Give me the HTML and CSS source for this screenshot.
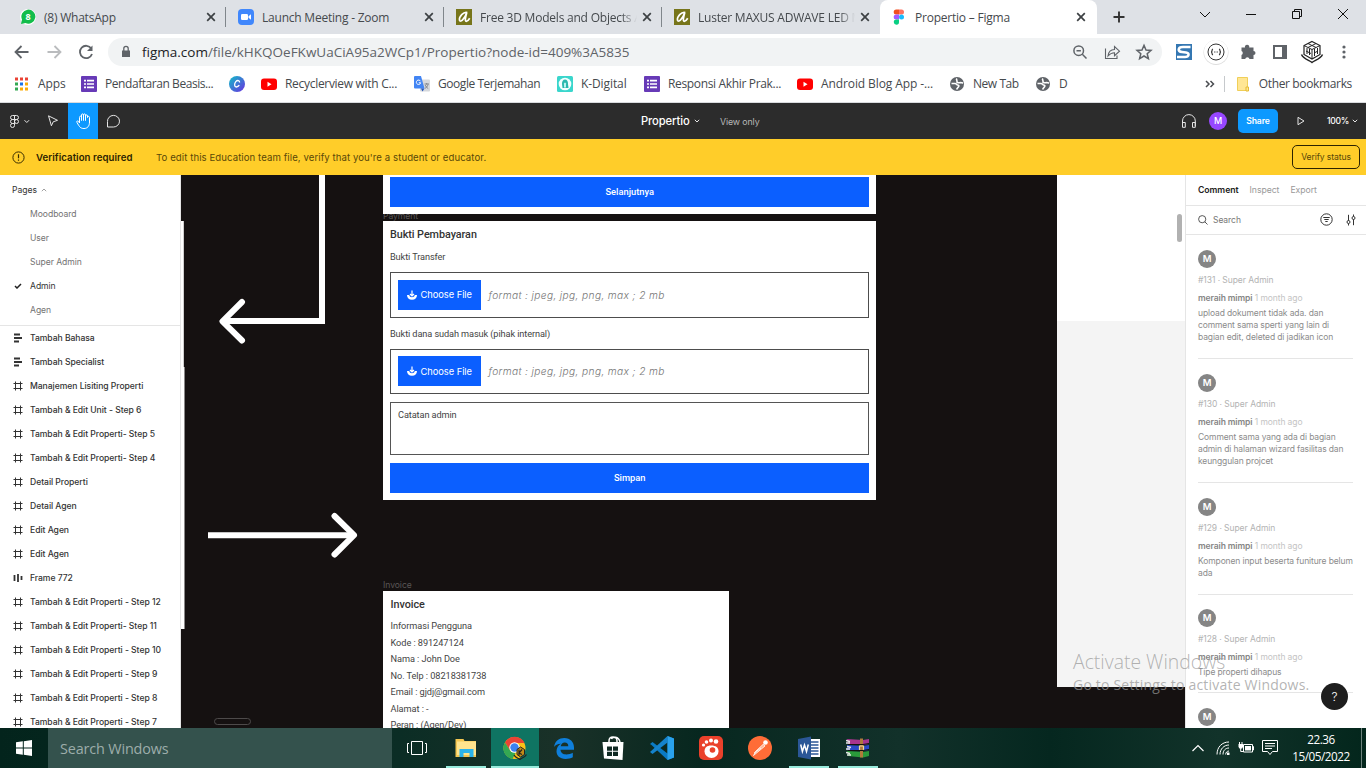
FILE: index.html
```
<!DOCTYPE html>
<html lang="id">
<head>
<meta charset="utf-8">
<title>Propertio – Figma</title>
<link rel="stylesheet" href="styles.css">
</head>
<body>
<svg class="defs" aria-hidden="true">
  <symbol id="x" viewBox="0 0 10 10"><path d="M1.200 1.200l7.600 7.600M8.800 1.200L1.200 8.800" fill="none" stroke="#3c4043" stroke-width="1.700"/></symbol>
  <symbol id="arch" viewBox="0 0 16 16"><rect width="16" height="16" fill="#77751a"/><path d="M11.300 3.500C7.500 2.300 2.800 8 3.500 11.200c.8 2.500 5-.8 7.300-7.700C9.500 8 8.600 12.300 10.300 12.300c1.200 0 2.700-1.800 3.400-3" fill="none" stroke="#fff" stroke-width="1.700"/></symbol>
  <symbol id="forms" viewBox="0 0 16 16"><rect width="16" height="16" rx="1" fill="#673ab7"/><path d="M3 4.700h2M6 4.700h7M3 8h2M6 8h7M3 11.300h2M6 11.300h7" stroke="#fff" stroke-width="1.700"/></symbol>
  <symbol id="yt" viewBox="0 0 16 16"><rect y="2.500" width="16" height="11.500" rx="3" fill="#f00"/><path d="M6.500 5.800v5l4-2.500z" fill="#fff"/></symbol>
  <symbol id="globe" viewBox="0 0 16 16"><circle cx="8" cy="8" r="7" fill="#5f6368"/><path d="M2.500 7.500h3.500c1.500 0 1.500 1.500 2.500 1.500s2 .5 1 1.800-1.500 1.500-1.800 2.700M8 2.500c-1.500 1.500.5 2 0 3s1 1.500 2.500 1.200 2.500.3 3.500.3" fill="none" stroke="#fff" stroke-width="1.600"/></symbol>
  <symbol id="frame" viewBox="0 0 10 10"><path d="M2.500.5v9M7.500.5v9M.5 2.500h9M.5 7.500h9" stroke="#333" stroke-width="1"/></symbol>
  <symbol id="rows" viewBox="0 0 10 10"><path d="M1 1.500h6M1 5h8M1 8.500h5" stroke="#333" stroke-width="1.800"/></symbol>
  <symbol id="cols" viewBox="0 0 10 10"><path d="M1.500 2v6M5 1v8M8.500 3v4" stroke="#333" stroke-width="1.800"/></symbol>
  <symbol id="upload" viewBox="0 0 12 12"><path d="M1 6h2.200c.3 1.500 1.400 2.200 2.800 2.200S8.500 7.500 8.800 6H11c0 3-2 4.800-5 4.800S1 9 1 6z" fill="#fff"/><path d="M6 1.500v5M4 5l2 2 2-2" fill="none" stroke="#fff" stroke-width="1.200"/></symbol>
</svg>

<header class="tabs">
  <div class="tab">
    <svg class="i16" viewBox="0 0 16 16"><circle cx="8" cy="8" r="8" fill="#fff"/><path d="M1 15l1-4.500A7 7 0 1 1 5.500 14z" fill="#12bd4b"/><text x="8" y="11.200" text-anchor="middle" class="wa">8</text></svg>
    <span class="t-title">(8) WhatsApp</span><svg class="i10"><use href="#x"/></svg></div>
  <div class="tab">
    <svg class="i16" viewBox="0 0 16 16"><rect width="16" height="16" rx="4" fill="#4087fc"/><rect x="3" y="5" width="7" height="6" rx="1.200" fill="#fff"/><path d="M10.500 7.200L13 5.300v5.400l-2.500-1.900z" fill="#fff"/></svg>
    <span class="t-title">Launch Meeting - Zoom</span><svg class="i10"><use href="#x"/></svg></div>
  <div class="tab"><svg class="i16"><use href="#arch"/></svg><span class="t-title fade">Free 3D Models and Objects A</span><svg class="i10"><use href="#x"/></svg></div>
  <div class="tab last"><svg class="i16"><use href="#arch"/></svg><span class="t-title fade">Luster MAXUS ADWAVE LED M</span><svg class="i10"><use href="#x"/></svg></div>
  <div class="tab active">
    <svg class="i16" viewBox="0 0 16 16"><path d="M5.200.5H8v5H5.200a2.500 2.500 0 0 1 0-5z" fill="#f24e1e"/><path d="M8 .5h2.500a2.500 2.500 0 0 1 0 5H8z" fill="#ff7262"/><path d="M5.200 5.500H8v5H5.200a2.500 2.500 0 0 1 0-5z" fill="#a259ff"/><circle cx="10.500" cy="8" r="2.500" fill="#1abcfe"/><path d="M5.200 10.500H8V13a2.600 2.600 0 1 1-2.800-2.500z" fill="#0acf83"/></svg>
    <span class="t-title">Propertio – Figma</span><svg class="i10"><use href="#x"/></svg></div>
  <svg class="plus" viewBox="0 0 12 12"><path d="M6 .5v11M.5 6h11" stroke="#333" stroke-width="1.900"/></svg>
  <div class="winctl">
    <svg viewBox="0 0 46 28"><path d="M18 12l5 5 5-5" class="wc"/></svg>
    <svg viewBox="0 0 46 28"><path d="M18 14.500h10" class="wc"/></svg>
    <svg viewBox="0 0 46 28"><path d="M18.500 11.500h7v7h-7zM20.500 11.500v-2h7v7h-2" class="wc"/></svg>
    <svg viewBox="0 0 46 28"><path d="M18 9l10 10M28 9L18 19" class="wc"/></svg>
  </div>
</header>

<div class="addr">
  <svg class="b32" viewBox="0 0 32 32"><path d="M22.500 16H10M15.500 10L9.500 16l6 6" class="nav"/></svg>
  <svg class="b32" viewBox="0 0 32 32"><path d="M9.500 16H22M16.500 10l6 6-6 6" class="nav off"/></svg>
  <svg class="b32" viewBox="0 0 32 32"><path d="M21.300 12.500A6.200 6.200 0 1 0 22 18" class="nav"/><path d="M22.500 9.500v5.500H17z" fill="#5f6368"/></svg>
  <div class="omni">
    <svg class="lock" viewBox="0 0 10 14"><path d="M1 5.500h8v6.500H1z" fill="#5f6368"/><path d="M2.800 6V3.500a2.200 2.200 0 0 1 4.400 0V6" fill="none" stroke="#5f6368" stroke-width="1.300"/></svg>
    <div class="url"><b>figma.com</b>/file/kHKQOeFKwUaCiA95a2WCp1/Propertio?node-id=409%3A5835</div>
    <svg class="b32" viewBox="0 0 32 32"><circle cx="14.700" cy="14.700" r="4.800" class="ic"/><path d="M18.300 18.300l4.200 4.200M12.500 14.700h4.400" class="ic"/></svg>
    <svg class="b32" viewBox="0 0 32 32"><path d="M9.500 12.500v10h11.500v-3" class="ic thin"/><path d="M12 20c.5-4.500 3-6.500 6.500-6.500v-3l5 4.700-5 4.500v-3c-2.500 0-4.500.8-6.500 3.300z" class="ic thin"/></svg>
    <svg class="b32" viewBox="0 0 32 32"><path d="M16 9.300l2 4.700 5 .4-3.800 3.300 1.200 5-4.400-2.700-4.400 2.700 1.200-5L9 14.400l5-.4z" class="ic"/></svg>
  </div>
  <div class="exts">
    <svg class="b32" viewBox="0 0 32 32"><rect x="8" y="8" width="16" height="16" fill="#3477b2"/><path d="M22.500 11h-7.500c-5.500 0-5.500 4.500-1 5l4 .5c4 .5 3 4.500-1 4.500H9" fill="none" stroke="#fff" stroke-width="2.600"/></svg>
    <svg class="b32" viewBox="0 0 32 32"><circle cx="16" cy="16.500" r="12.500" fill="#ddd"/><circle cx="16" cy="16" r="12" fill="#fff"/><circle cx="16" cy="16" r="8" fill="none" stroke="#333"/><path d="M13 13c-2 .5 0 3-2 3 2 0 0 2.500 2 3M19 13c2 .5 0 3 2 3-2 0 0 2.500-2 3" fill="none" stroke="#333" stroke-width="1.200"/><path d="M14 16h4" stroke="#555" stroke-dasharray="1 .5"/></svg>
    <svg class="b32" viewBox="0 0 32 32"><path d="M9.500 11.500H13a2.200 2.200 0 1 1 4.200 0h4.300V15a2 2 0 1 1 0 4v4h-4a2.200 2.200 0 0 0-4.300 0H9.500v-4a2.200 2.200 0 0 0 0-4z" fill="#5f6368"/></svg>
    <svg class="b32" viewBox="0 0 32 32"><path d="M9 9h14v14H9zM11 11v10h7V11z" fill="#5f6368" fill-rule="evenodd"/></svg>
    <svg class="b32" viewBox="0 0 32 32"><path d="M16 5.500l8 4v9l-8 4.500-8-4.500v-9z" fill="#fff" stroke="#222" stroke-width="1.200"/><path d="M8 9.500l8 4 8-4M16 13.500V23M12 7.500l8 4M20 7.500l-8 4M11 12v6M13.500 13v6M10 15l5 2.500M18.500 13v7M21.500 12v6M18 17l4-2" fill="none" stroke="#222" stroke-width="1"/><path d="M5.500 18.500c2 4.500 7 5.500 10.500 8 3.500-2.500 8.500-3.500 10.500-8" fill="none" stroke="#222" stroke-width="1.500"/></svg>
    <svg class="b32" viewBox="0 0 32 32"><circle cx="16" cy="11" r="1.600" fill="#5f6368"/><circle cx="16" cy="16" r="1.600" fill="#5f6368"/><circle cx="16" cy="21" r="1.600" fill="#5f6368"/></svg>
  </div>
</div>

<nav class="marks">
  <div class="bm m1"><svg class="i16" viewBox="0 0 16 16"><path d="M1 1.500h3v3H1zM6 1.500h3v3H6zM11 1.500h3v3h-3z" fill="#ea4335"/><path d="M1 6.500h3v3H1zM1 11.500h3v3H1z" fill="#34a853"/><path d="M6 6.500h3v3H6z" fill="#1a73e8"/><path d="M11 6.500h3v3h-3zM6 11.500h3v3H6zM11 11.500h3v3h-3z" fill="#fbab05"/></svg><span>Apps</span></div>
  <div class="bm m2"><svg class="i16"><use href="#forms"/></svg><span>Pendaftaran Beasis...</span></div>
  <div class="bm m3"><svg class="i16" viewBox="0 0 16 16"><defs><linearGradient id="cv" x1="0" y1="0" x2="1" y2="1"><stop offset="0" stop-color="#10bfc8"/><stop offset="1" stop-color="#6a2fe0"/></linearGradient></defs><circle cx="8" cy="8" r="8" fill="url(#cv)"/><path d="M10.500 6.500c.5-2-2-2.800-3.700-.8-1.800 2.200-1.500 5.300.5 5.300 1.500 0 2.500-1 3-1.800" fill="none" stroke="#fff" stroke-width="1.300"/></svg></div>
  <div class="bm m4"><svg class="i16"><use href="#yt"/></svg><span>Recyclerview with C...</span></div>
  <div class="bm m5"><svg class="i16" viewBox="0 0 16 16"><rect x="6" y="3.500" width="10" height="12" rx="1" fill="#d5d8dc"/><path d="M1 0h6l3.500 12.500H1a1 1 0 0 1-1-1V1a1 1 0 0 1 1-1z" fill="#4285f4"/><path d="M7 12.500h3.500l-2 3z" fill="#2456b8"/><path d="M6.500 5.200a2.200 2.200 0 1 0 .2 1.600H4.800" fill="none" stroke="#fff"/><path d="M10.500 8h4.500M12.700 7v1.500M14 8.500c-.5 2-1.500 3-3 3.800M11.200 9c.5 1.500 1.500 2.500 3 3.500" fill="none" stroke="#72777d" stroke-width=".8"/></svg><span>Google Terjemahan</span></div>
  <div class="bm m6"><svg class="i16" viewBox="0 0 16 16"><rect width="16" height="16" rx="1.500" fill="#3ad6cc"/><circle cx="8" cy="8" r="6.300" fill="#f4ffff"/><path d="M8 3.500c2 0 3 2 3 4 0 2 .5 3 .5 4.500h-6c0-1.500-.5-2.500-.5-4.500 0-2 1-4 3-4z" fill="#2ab8ae"/><path d="M7 8.500a1.200 1.200 0 1 1 2 0v3H7z" fill="#bdf3ef"/></svg><span>K-Digital</span></div>
  <div class="bm m7"><svg class="i16"><use href="#forms"/></svg><span>Responsi Akhir Prak...</span></div>
  <div class="bm m8"><svg class="i16"><use href="#yt"/></svg><span>Android Blog App -...</span></div>
  <div class="bm m9"><svg class="i16"><use href="#globe"/></svg><span>New Tab</span></div>
  <div class="bm m10"><svg class="i16"><use href="#globe"/></svg><span>D</span></div>
  <div class="bm-right"><svg class="more" viewBox="0 0 10 8"><path d="M1 1l3 3-3 3M5.500 1l3 3-3 3" fill="none" stroke="#4a4d51" stroke-width="1.500"/></svg><i class="vsep"></i>
  <svg class="folder" viewBox="0 0 13 16"><path d="M.5 1.500h10v13H.5z" fill="#ffe694" stroke="#f0cf58"/><path d="M9 11h2.500v4H9z" fill="#ffe694" stroke="#e5bb35"/></svg><span>Other bookmarks</span></div>
</nav>

<div class="fbar">
  <svg class="f-logo" viewBox="0 0 34 36"><path d="M14.500 12.500h-2a2 2 0 0 0 0 4h2zM14.500 12.500h2a2 2 0 0 1 0 4h-2zM14.500 16.500h-2a2 2 0 0 0 0 4h2zM14.500 20.500h-2a2 2 0 1 0 2 2z" class="fi"/><circle cx="16.500" cy="18.500" r="2" class="fi"/><path d="M24.500 17.200l2.300 2.300 2.300-2.300" class="fi"/></svg>
  <svg class="f-tool cursor" viewBox="0 0 30 36"><path d="M10.500 12.800l9 4.500-4.300 1.500-1.800 4z" class="fi"/></svg>
  <svg class="f-tool on" viewBox="0 0 30 36"><path d="M11.500 20v-5.500c0-1.800 2-1.800 2 0v3V12c0-1.500 2-1.500 2 0v5.500V12c0-1.500 2-1.500 2 0v5.500V13c0-1.500 2-1.500 2 0v1.500c0-1.500 2-1.500 2 0V19c0 4-2 6.500-5.500 6.500S11.500 24 9 19.500c-.8-1.500.8-2.200 1.700-1z" class="fi w"/></svg>
  <svg class="f-tool" viewBox="0 0 30 36"><path d="M9.500 24v-5.500a6 5.800 0 1 1 6 5.500z" class="fi"/></svg>
  <div class="f-mid"><span class="f-name">Propertio</span><svg class="chev" viewBox="0 0 6 4"><path d="M.8.8L3 3 5.200.8" class="fi"/></svg><span class="f-view">View only</span></div>
  <div class="f-right">
    <svg class="phones" viewBox="0 0 16 14"><path d="M1.500 12V7a6.300 6.300 0 0 1 12.800 0v5M1.500 8.500h2.800v4.800H1.500zM11.500 8.500h2.800v4.800h-2.800z" class="fi"/></svg>
    <span class="me">M</span><span class="share">Share</span>
    <svg class="play" viewBox="0 0 8 10"><path d="M1 1.300L7 5 1 8.700z" class="fi"/></svg>
    <span class="pct">100%</span><svg class="chev" viewBox="0 0 6 4"><path d="M.8.8L3 3 5.200.8" class="fi"/></svg>
  </div>
</div>

<div class="banner">
  <svg class="warn" viewBox="0 0 13 13"><circle cx="6.500" cy="6.500" r="5.600" fill="none" stroke="#3a2d00"/><path d="M6.500 3.300v4M6.500 8.500v1.300" stroke="#3a2d00" stroke-width="1.200"/></svg>
  <b>Verification required</b><span>To edit this Education team file, verify that you're a student or educator.</span><span class="verify">Verify status</span>
</div>

<main class="work">
  <aside class="left">
    <div class="pages">
      <div class="phead">Pages<svg class="chev" viewBox="0 0 6 4"><path d="M.8 3.200L3 1l2.200 2.200" fill="none" stroke="#888" stroke-width=".8"/></svg></div>
      <div class="prow">Moodboard</div><div class="prow">User</div><div class="prow">Super Admin</div>
      <div class="prow cur"><svg class="check" viewBox="0 0 8 6"><path d="M1 3l2 2 4-4" fill="none" stroke="#222" stroke-width="1.500"/></svg>Admin</div><div class="prow">Agen</div>
    </div>
    <div class="layers">
      <div class="lrow"><svg><use href="#rows"/></svg>Tambah Bahasa</div>
      <div class="lrow"><svg><use href="#rows"/></svg>Tambah Specialist</div>
      <div class="lrow"><svg><use href="#frame"/></svg>Manajemen Lisiting Properti</div>
      <div class="lrow"><svg><use href="#frame"/></svg>Tambah &amp; Edit Unit - Step 6</div>
      <div class="lrow"><svg><use href="#frame"/></svg>Tambah &amp; Edit Properti- Step 5</div>
      <div class="lrow"><svg><use href="#frame"/></svg>Tambah &amp; Edit Properti- Step 4</div>
      <div class="lrow"><svg><use href="#frame"/></svg>Detail Properti</div>
      <div class="lrow"><svg><use href="#frame"/></svg>Detail Agen</div>
      <div class="lrow"><svg><use href="#frame"/></svg>Edit Agen</div>
      <div class="lrow"><svg><use href="#frame"/></svg>Edit Agen</div>
      <div class="lrow"><svg><use href="#cols"/></svg>Frame 772</div>
      <div class="lrow"><svg><use href="#frame"/></svg>Tambah &amp; Edit Properti - Step 12</div>
      <div class="lrow"><svg><use href="#frame"/></svg>Tambah &amp; Edit Properti- Step 11</div>
      <div class="lrow"><svg><use href="#frame"/></svg>Tambah &amp; Edit Properti - Step 10</div>
      <div class="lrow"><svg><use href="#frame"/></svg>Tambah &amp; Edit Properti - Step 9</div>
      <div class="lrow"><svg><use href="#frame"/></svg>Tambah &amp; Edit Properti - Step 8</div>
      <div class="lrow"><svg><use href="#frame"/></svg>Tambah &amp; Edit Properti - Step 7</div>
    </div>
  </aside>

  <section class="canvas">
    <svg class="arrows" viewBox="181 175 1004 553"><path d="M181 221h2.800v146h.7v262H181z" fill="#fff"/><g fill="none" stroke="#fff" stroke-width="6"><path d="M322 170v151H224M208 535.200h144"/><path d="M242 302l-19.500 19.300L242 340.500M334.500 516l19.500 19.200-19.500 19.300" stroke-linecap="round" stroke-linejoin="round"/></g><rect x="214.500" y="718.500" width="36" height="6" rx="3" fill="none" stroke="#4d4a4a"/></svg>
    <span class="flabel l-pay">Payment</span>
    <div class="frame f-top"><div class="btn">Selanjutnya</div></div>
    <div class="frame f-pay">
      <h2>Bukti Pembayaran</h2>
      <p class="lab">Bukti Transfer</p>
      <div class="file"><span class="choose"><svg class="i12"><use href="#upload"/></svg>Choose File</span><em>format : jpeg, jpg, png, max ; 2 mb</em></div>
      <p class="lab two">Bukti dana sudah masuk (pihak internal)</p>
      <div class="file"><span class="choose"><svg class="i12"><use href="#upload"/></svg>Choose File</span><em>format : jpeg, jpg, png, max ; 2 mb</em></div>
      <div class="note">Catatan admin</div>
      <div class="btn">Simpan</div>
    </div>
    <span class="flabel l-inv">Invoice</span>
    <div class="frame f-inv">
      <h2>Invoice</h2>
      <p>Informasi Pengguna</p><p>Kode : 891247124</p><p>Nama : John Doe</p><p>No. Telp : 08218381738</p><p>Email : gjdj@gmail.com</p><p>Alamat : -</p><p>Peran : (Agen/Dev)</p>
    </div>
    <div class="frame f-side"></div>
    <i class="scroll"></i>
  </section>

  <aside class="right">
    <div class="rtabs"><b>Comment</b><span>Inspect</span><span>Export</span></div>
    <div class="search"><svg class="i10b" viewBox="0 0 10 10"><circle cx="4.200" cy="4.200" r="3.600" fill="none" stroke="#444" stroke-width=".9"/><path d="M6.800 6.800l2.700 2.700" stroke="#444" stroke-width=".9"/></svg><span>Search</span>
      <svg class="filt" viewBox="0 0 13 13"><circle cx="6.500" cy="6.500" r="5.700" fill="none" stroke="#333"/><path d="M3.300 4.500h6.400M4.300 6.500h4.400M5.300 8.500h2.400" stroke="#333"/></svg>
      <svg class="sort" viewBox="0 0 10 12"><path d="M2.500.8v6M2.500 9.500v2M7.500 11.200v-6M7.500 2.500v-2" stroke="#333"/><circle cx="2.500" cy="8" r="1.500" fill="none" stroke="#333"/><circle cx="7.500" cy="4" r="1.500" fill="none" stroke="#333"/></svg></div>
    <div class="cms">
      <article><i class="av">M</i><div class="num">#131 · Super Admin</div><div class="who"><b>meraih mimpi</b> 1 month ago</div><div class="msg">upload dokument tidak ada. dan<br>comment sama sperti yang lain di<br>bagian edit, deleted di jadikan icon</div></article>
      <article><i class="av">M</i><div class="num">#130 · Super Admin</div><div class="who"><b>meraih mimpi</b> 1 month ago</div><div class="msg">Comment sama yang ada di bagian<br>admin di halaman wizard fasilitas dan<br>keunggulan projcet</div></article>
      <article><i class="av">M</i><div class="num">#129 · Super Admin</div><div class="who"><b>meraih mimpi</b> 1 month ago</div><div class="msg">Komponen input beserta funiture belum<br>ada</div></article>
      <article class="short"><i class="av">M</i><div class="num">#128 · Super Admin</div><div class="who"><b>meraih mimpi</b> 1 month ago</div><div class="msg">Tipe properti dihapus</div></article>
      <article><i class="av">M</i></article>
    </div>
  </aside>
  <div class="wmark"><div class="w1">Activate Windows</div><div class="w2">Go to Settings to activate Windows.</div></div>
  <span class="help">?</span>
</main>

<footer class="task">
  <div class="start"><svg viewBox="0 0 16 16"><path d="M0 2.300L6.800 1.300v6.200H0zM7.800 1.200L16 0v7.500H7.800zM0 8.500h6.800v6.200L0 13.700zM7.800 8.500H16V16l-8.200-1.200z" fill="#fff"/></svg></div>
  <div class="tsearch">Search Windows</div>
  <div class="apps">
    <div class="app"><svg viewBox="0 0 24 24"><path d="M6.500 5.500h11v13h-11zM4 7.500H2.500v9H4M20 7.500h1.500v9H20" fill="none" stroke="#fff"/></svg></div>
    <div class="app run"><svg viewBox="0 0 24 24"><path d="M1.500 3h8l1 2H22v16H1.500z" fill="#f5c752"/><path d="M3 5.500h19V19H3z" fill="#ffe48e"/><path d="M5.500 21v-8h14v8h-4v-4h-6v4z" fill="#2bb3ea"/></svg></div>
    <div class="app run wide"><svg viewBox="0 0 24 24"><circle cx="11.500" cy="12" r="11" fill="#fbc116"/><path d="M2 6.500A11 11 0 0 1 21.500 7H11.500L7 14.500z" fill="#ea4335"/><path d="M2 6.500L7.500 15l5 2-3 6A11 11 0 0 1 2 6.500z" fill="#34a853"/><circle cx="11.500" cy="11.500" r="5.200" fill="#fff"/><circle cx="11.500" cy="11.500" r="4.200" fill="#3c82f0"/><path d="M17.500 11l4 2.500v5L17.500 21 14 18.500v-5z" fill="#c38c18" stroke="#222"/><path d="M11 19c1.500 3 4.500 3 6 4.500 1.500-1.500 5-2 6.500-5M16 13.500v6M19 13.500l-3 3.500 3 1.500" fill="none" stroke="#222" stroke-width="1.200"/></svg></div>
    <div class="app"><svg viewBox="0 0 24 24"><path d="M2 11C3 5 7 2 12.300 2 18.500 2 22 6.300 22 11.500v2.300H8.500c.2 3 2.500 4.700 5.800 4.700 2.500 0 4.700-.7 6.500-1.700v4.500C18.800 22.500 16.300 23 13.500 23 7.500 23 4.500 19.500 4.500 15.300c0-3.500 1.700-6 4.500-7.600C5.500 7.800 3.200 9.300 2 11zm6.700-.8h7.600c0-2.500-1.300-3.700-3.500-3.700s-3.700 1.500-4.100 3.700z" fill="#0f7fdb"/></svg></div>
    <div class="app"><svg viewBox="0 0 24 24"><path d="M1.500 6h21l-1 18-18.500-1.500z" fill="#fff"/><path d="M8 8V5c0-2.500 1-4 4-4s4 1.500 4 4v3M10.500 3c1-2.500 7-3 8.500 3" fill="none" stroke="#fff" stroke-width="1.500"/><path d="M6 10.500h5v4.300H6zM12 10.500h5v4.300h-5zM6 15.800h5V20H6zM12 15.800h5V20h-5z" fill="#102a24"/></svg></div>
    <div class="app"><svg viewBox="0 0 24 24"><path d="M17.500 0L24 2.500v19L17.500 24 1.500 9 0 8l2.500-2 15 11.500z" fill="#0a7ac4"/><path d="M17.500 0v6.500L2.500 18 0 16z" fill="#1583cc"/><path d="M17.500 0L24 2.500v19L17.500 24z" fill="#2aa2ec"/></svg></div>
    <div class="app"><svg viewBox="0 0 24 24"><rect width="24" height="24" rx="5" fill="#ea412b"/><path d="M12 9.500c5 0 7.500 2 7.500 6a7 6.500 0 0 1-14 0c0-4 2.500-6 6.500-6z" fill="#fff"/><circle cx="13.500" cy="14" r="2.800" fill="#ea412b"/><circle cx="4.500" cy="9" r="1.600" fill="#fff"/><circle cx="7.500" cy="6" r="1.800" fill="#fff"/><circle cx="12" cy="4.500" r="2" fill="#fff"/><circle cx="17" cy="5.500" r="2.300" fill="#fff"/></svg></div>
    <div class="app"><svg viewBox="0 0 24 24"><circle cx="12" cy="12" r="12" fill="#ff6c37"/><circle cx="17.500" cy="6.500" r="2.300" fill="#fff"/><path d="M15.500 8L8 15l-2.500 4.500L17 10zM6 17l7-5" fill="#ffb596" stroke="#fff" stroke-width=".8"/></svg></div>
    <div class="app run"><svg viewBox="0 0 24 24"><path d="M12 3h11v18H12z" fill="#fff"/><path d="M14 6h7.500M14 9h7.500M14 12h7.500M14 15h7.500M14 18h7.500" stroke="#2b5797" stroke-width="1.400"/><path d="M1 3l13-2.500v23L1 21z" fill="#2b5797"/><path d="M3.700 8.500l1.700 7L7.500 9l2 6.500 1.800-7" fill="none" stroke="#fff" stroke-width="1.500"/></svg></div>
    <div class="app run"><svg viewBox="0 0 24 24"><path d="M1 3l16 1 6-1v5l-6 1L2 8z" fill="#a8358f"/><path d="M1 9l16 1 6-1v5l-6 1L1 14z" fill="#2a49c8"/><path d="M1 15l16 1 6-1v5l-6 1.500L2 20z" fill="#2a9a3a"/><path d="M0 4.500l4 1M1 10.500l4 1M0 16.500l4 1M0 7h4M0 13h4M1 19h4" stroke="#e8e8e8" stroke-width="1.500"/><path d="M14 2.500h3v19h-3z" fill="#b07a3c"/><path d="M13.500 10h4v4.500h-4z" fill="none" stroke="#efdc9a" stroke-width="1.200"/><path d="M2 8.500h15l6-1M2 14.500h15l6-1" fill="none" stroke="#111"/></svg></div>
  </div>
  <div class="tray">
    <svg class="t1" viewBox="0 0 14 8"><path d="M1.500 7L7 1.500 12.500 7" fill="none" stroke="#fff" stroke-width="1.200"/></svg>
    <svg class="t2" viewBox="0 0 14 14"><path d="M1 13.500C1 6 6 1 13 1M4 13.500C4 8 8 4 13 4M7 13.500C7 9.500 9.500 7 13 7M9.700 13.500c0-2 1.300-3.500 3.300-3.500" fill="none" stroke="#fff"/><path d="M11 11.500h2.500V14H11z" fill="#fff"/></svg>
    <svg class="t3" viewBox="0 0 16 14"><path d="M5.500 3.500h9v7.500h-9zM14.500 5.500h1v3.500h-1" fill="none" stroke="#fff"/><path d="M7 5h6v4.500H7z" fill="#fff"/><path d="M.5 3h4.500v2.500a2.200 2.200 0 0 1-4.500 0z" fill="#fff"/><path d="M1.500 1v2M4 1v2M2.700 7v3.500h3" fill="none" stroke="#fff"/></svg>
    <svg class="t4" viewBox="0 0 16 16"><path d="M.5.500h15v11h-5l-2.500 3-2.500-3h-5zM3 3.500h10M3 6h10M3 8.500h7" fill="none" stroke="#fff"/></svg>
    <div class="clock"><div>22.36</div><div>15/05/2022</div></div><i class="peek"></i>
  </div>
</footer>
</body>
</html>
```
FILE: styles.css
```
* { box-sizing: border-box; }
html, body { margin: 0; }
body { width: 1366px; height: 768px; overflow: hidden; display: flex; flex-direction: column; font-family: "Open Sans", "Noto Sans", sans-serif; background: #fff; }
svg { display: block; flex: none; }
.defs { display: none; }
i { font-style: normal; }
.i16 { width: 16px; height: 16px; }
.i10 { width: 10px; height: 10px; }
.i12 { width: 12px; height: 12px; }
.chev { width: 6px; height: 4px; }

/* browser tab strip */
.tabs { height: 34px; background: #dee1e6; display: flex; flex: none; padding-left: 8px; }
.tab { width: 218px; display: flex; align-items: center; padding: 0 10px 0 12px; background: linear-gradient(#80868b, #80868b) right 7px / 1px 20px no-repeat; flex: none; }
.tab.last { background: none; }
.tab.active { background: #fff; border-radius: 8px 8px 0 0; width: 217px; padding: 0 11px; }
.t-title { flex: 1; margin-left: 8px; font-size: 12px; letter-spacing: -.22px; color: #45494d; white-space: nowrap; overflow: hidden; }
.fade { -webkit-mask-image: linear-gradient(90deg, #000 90%, transparent 100%); mask-image: linear-gradient(90deg, #000 90%, transparent 100%); margin-right: 5px; }
.wa { font: bold 9px "Open Sans", sans-serif; fill: #fff; }
.plus { width: 12px; height: 12px; margin: 11px 0 0 16px; }
.winctl { display: flex; margin-left: auto; }
.winctl svg { width: 46px; height: 28px; }
.wc { fill: none; stroke: #111; stroke-width: 1; }

/* address bar */
.addr { height: 36px; display: flex; align-items: center; flex: none; padding-left: 6px; }
.b32 { width: 32px; height: 32px; }
.nav { fill: none; stroke: #5f6368; stroke-width: 1.8; }
.nav.off { stroke: #babcbe; }
.omni { display: flex; align-items: center; width: 1054px; height: 28px; margin-left: 6px; border-radius: 14px; background: #f1f3f4; padding: 0 2px 0 13px; }
.lock { width: 10px; height: 14px; }
.url { flex: 1; margin-left: 11px; font-size: 13.5px; color: #5f6368; white-space: nowrap; }
.url b { font-weight: 400; color: #202124; }
.ic { fill: none; stroke: #5f6368; stroke-width: 1.5; }
.thin { stroke-width: 1.1; }
.exts { display: flex; margin-left: 6px; }

/* bookmarks */
.marks { height: 33px; flex: none; display: flex; align-items: center; padding: 0 14px 5px 14px; border-bottom: 1px solid #d9dbde; font-size: 12px; color: #45494d; letter-spacing: -.1px; }
.bm { display: flex; align-items: center; gap: 8px; white-space: nowrap; flex: none; }
.m1 { width: 67px; }
.m2 { width: 148px; letter-spacing: -.44px; }
.m3 { width: 32px; }
.m4 { width: 153px; letter-spacing: -.3px; }
.m5 { width: 143px; letter-spacing: -.45px; }
.m6 { width: 87px; }
.m7 { width: 153px; letter-spacing: -.34px; }
.m8 { width: 152px; }
.m9 { width: 86px; letter-spacing: -.45px; }
.m10 { width: 60px; }
.bm-right { margin-left: auto; display: flex; align-items: center; white-space: nowrap; letter-spacing: -.35px; }
.more { width: 10px; height: 8px; }
.vsep { width: 1px; height: 16px; background: #c6c9cc; margin: 0 12px 0 9px; }
.folder { width: 13px; height: 16px; margin-right: 9px; }

/* editor toolbar */
.fbar, .banner, .left, .right, .flabel, .help { font-family: Inter, sans-serif; }
.fbar { height: 36px; flex: none; background: #2c2c2c; display: flex; align-items: center; color: #fff; }
.fi { fill: none; stroke: #e6e6e6; stroke-width: 1; }
.fi.w { stroke: #fff; }
.f-logo { width: 34px; height: 36px; }
.f-tool { width: 30px; height: 36px; }
.cursor { margin-left: 4px; }
.on { background: #0d99ff; }
.f-mid { display: flex; align-items: center; margin-left: 513px; padding-bottom: 1px; }
.f-name { width: 53px; font-size: 11.2px; font-weight: 500; letter-spacing: -.1px; }
.f-view { margin: 1px 0 0 20px; font-size: 8.8px; color: #b8b8b8; letter-spacing: -.1px; }
.f-right { margin-left: auto; display: flex; align-items: center; padding-right: 8px; }
.phones { width: 16px; height: 14px; margin-right: 12px; }
.me { width: 18px; height: 18px; border-radius: 50%; background: #9747ff; font-size: 9px; font-weight: 500; line-height: 18px; text-align: center; margin-right: 11px; }
.share { width: 40px; height: 24px; border-radius: 5px; background: #0d99ff; font-size: 8.6px; font-weight: 600; line-height: 24px; text-align: center; margin-right: 19px; letter-spacing: -.1px; }
.play { width: 8px; height: 10px; margin-right: 22px; }
.pct { width: 25px; font-size: 8.6px; font-weight: 500; letter-spacing: -.3px; }

.banner { height: 36px; flex: none; background: #ffcd29; display: flex; align-items: center; padding: 0 6px 0 12px; color: #5a4807; font-size: 9.6px; white-space: nowrap; letter-spacing: .08px; }
.banner b { width: 120px; margin-left: 11px; font-weight: 600; color: #2c2300; }
.warn { width: 13px; height: 13px; }
.verify { margin-left: auto; width: 68px; height: 24px; line-height: 22px; text-align: center; border: 1px solid #2c2300; border-radius: 5px; font-size: 8.6px; letter-spacing: -.1px; }

.work { flex: none; height: 553px; display: flex; position: relative; overflow: hidden; }
.left { width: 181px; flex: none; border-right: 1px solid #e5e5e5; color: #333; font-size: 8.6px; letter-spacing: -.05px; }
.pages { height: 151px; border-bottom: 1px solid #e5e5e5; }
.phead { height: 27px; padding: 2px 0 0 12px; display: flex; align-items: center; gap: 4px; }
.prow { height: 24px; padding-left: 30px; line-height: 24px; color: #737373; }
.cur { color: #333; display: flex; align-items: center; padding-left: 14px; gap: 8px; }
.check { width: 8px; height: 6px; }
.lrow { height: 24px; display: flex; align-items: center; gap: 7px; padding: 0 0 1px 13px; font-weight: 500; white-space: nowrap; }
.lrow svg { width: 10px; height: 10px; }

/* canvas: free placement of frames */
.canvas { flex: 1; background: #151111; position: relative; overflow: hidden; font-family: Roboto, sans-serif; color: #444; }
.arrows { position: absolute; inset: 0; width: 1004px; height: 553px; }
.flabel { position: absolute; font-size: 8.6px; line-height: 10px; color: #5a5656; letter-spacing: -.05px; }
.l-pay { left: 202px; top: 36px; }
.l-inv { left: 202px; top: 405px; }
.frame { position: absolute; background: #fff; }
.frame h2 { margin: 0; font-size: 10.8px; line-height: 14px; font-weight: 500; color: #333; letter-spacing: -.06px; }
.f-top { left: 202px; top: 0; width: 493.4px; height: 39px; padding: 2px 7px; }
.f-pay { left: 202px; top: 46px; width: 493.4px; height: 278.5px; padding: 7px 7px; }
.f-inv { left: 202px; top: 416px; width: 346.4px; height: 150px; padding: 7px 7.5px; }
.f-inv h2 { margin-bottom: 6px; }
.f-inv p { margin: 0; height: 16.5px; line-height: 16.5px; font-size: 9.2px; letter-spacing: -.06px; }
.btn { height: 30px; background: #0b5fff; color: #fff; font-size: 9.3px; font-weight: 500; text-align: center; line-height: 30px; }
.lab { margin: 7px 0 0; height: 16px; line-height: 16px; font-size: 9.2px; letter-spacing: -.1px; }
.file { margin-top: 7px; height: 45.5px; border: 1px solid #4d4d4d; display: flex; align-items: center; padding-left: 6.5px; font-family: Inter, sans-serif; }
.lab.two { margin-top: 8px; }
.choose { width: 83px; height: 30px; background: #0b5fff; color: #fff; font-size: 9.3px; display: flex; align-items: center; padding-left: 8px; gap: 3px; white-space: nowrap; letter-spacing: -.03px; }
.file em { margin-left: 8px; font-size: 10.2px; color: #777; font-weight: 300; white-space: nowrap; letter-spacing: .36px; }
.note { margin: 7.5px 0; height: 53.5px; border: 1px solid #555; padding: 5px 7px; font-size: 9.2px; line-height: 14px; letter-spacing: -.1px; }
.f-side { left: 876px; top: 0; width: 128px; height: 511.5px; background: linear-gradient(#fff 146px, #f4f4f4 146px); }
.scroll { position: absolute; left: 996px; top: 39px; width: 5px; height: 28px; border-radius: 2.5px; background: #b1b1b1; }

/* comments panel */
.right { width: 181px; flex: none; border-left: 1px solid #e5e5e5; background: #fff; font-size: 8.5px; color: #8c8c8c; letter-spacing: -.06px; }
.rtabs { height: 31px; border-bottom: 1px solid #e5e5e5; display: flex; align-items: center; gap: 11px; padding: 0 0 1px 12px; color: #999; font-size: 8.7px; letter-spacing: -.05px; }
.rtabs b { font-weight: 600; color: #222; }
.search { height: 29px; border-bottom: 1px solid #e5e5e5; display: flex; align-items: center; padding: 0 0 1px 12px; color: #777; }
.search span { margin-left: 5px; width: 107px; }
.i10b { width: 10px; height: 10px; }
.filt { width: 13px; height: 13px; }
.sort { width: 10px; height: 12px; margin-left: 13px; }
.cms { padding: 0 13px 0 12px; }
article { padding: 15px 0; border-bottom: 1px solid #e5e5e5; line-height: 12px; white-space: nowrap; }
article:nth-child(3) { padding-bottom: 14.5px; }
.short { padding: 14.5px 0 14px; }
.av { display: block; width: 18px; height: 18px; border-radius: 50%; background: #858585; color: #fff; text-align: center; font-weight: 600; line-height: 18px; font-size: 9.5px; }
.num { margin-top: 6px; color: #b3b3b3; }
.who { margin-top: 6px; color: #c4c4c4; letter-spacing: -.09px; }
.who b { font-weight: 600; color: #858585; }
.msg { margin-top: 3px; letter-spacing: -.12px; }
.help { position: absolute; left: 1321px; top: 508px; width: 27px; height: 27px; border-radius: 50%; background: #1e1e1e; color: #fff; text-align: center; line-height: 27px; font-size: 12px; font-weight: 300; }
.wmark { position: absolute; left: 1073px; top: 474px; color: rgba(150, 150, 150, .72); white-space: nowrap; }
.w1 { font-size: 19.4px; line-height: 26px; font-weight: 300; }
.w2 { font-size: 14px; line-height: 20px; letter-spacing: .2px; }

/* taskbar */
.task { height: 40px; flex: none; display: flex; background: linear-gradient(90deg, #03241c 0, #0b2d25 400px, #1a3128 560px, #07271f 700px, #12312a 900px, #05271f 1050px, #12332a 1220px, #03261c 1366px); color: #fff; }
.start { width: 48px; padding: 12px 16px; }
.start svg { width: 16px; height: 16px; }
.tsearch { width: 344px; background: #34524d; color: #9dadaa; font-size: 14.4px; line-height: 41px; padding-left: 12px; letter-spacing: -.15px; }
.apps { display: flex; gap: 1px; margin-left: 1px; }
.app { width: 48px; height: 40px; padding: 8px 12px; }
.app svg { width: 24px; height: 24px; }
.run { background: linear-gradient(#98ebdc, #98ebdc) 50% 100% / 40px 2px no-repeat; }
.wide { background: linear-gradient(#98ebdc, #98ebdc) 50% 100% / 48px 2px no-repeat, #0f7462; }
.tray { margin-left: auto; display: flex; align-items: center; }
.t1 { width: 14px; height: 8px; }
.t2 { width: 14px; height: 14px; margin-left: 11px; }
.t3 { width: 16px; height: 14px; margin-left: 8px; }
.t4 { width: 16px; height: 16px; margin-left: 8px; }
.clock { width: 70px; margin-left: 8px; font-size: 11.7px; line-height: 17px; text-align: center; letter-spacing: -.45px; padding-bottom: 1px; }
.peek { width: 1px; height: 40px; background: #6d827c; margin: 0 4px 0 5px; }
```
